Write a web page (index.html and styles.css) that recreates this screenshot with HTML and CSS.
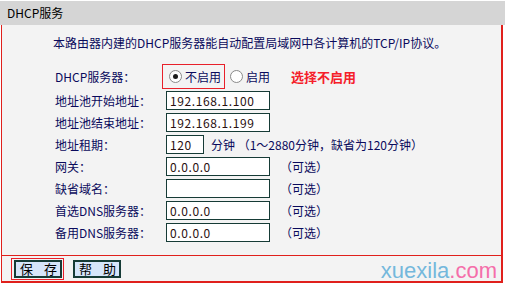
FILE: index.html
```html
<!DOCTYPE html>
<html lang="zh-CN">
<head>
  <meta charset="UTF-8" />
  <title>DHCP服务</title>
  <link rel="stylesheet" href="styles.css">
</head>
<body>
  <div class="panel">
    <div class="title">DHCP服务</div>

    <div class="frame">
      <p class="intro">本路由器内建的DHCP服务器能自动配置局域网中各计算机的TCP/IP协议。</p>

      <div class="form">
        <div class="row row-first">
          <span class="label">DHCP服务器：</span>
          <span class="choice">
            <span class="radio checked"></span>不启用
          </span>
          <span class="radio radio-second"></span>启用
          <span class="note">选择不启用</span>
        </div>
        <div class="row">
          <span class="label">地址池开始地址：</span>
          <input class="field" type="text" value="192.168.1.100">
        </div>
        <div class="row">
          <span class="label">地址池结束地址：</span>
          <input class="field" type="text" value="192.168.1.199">
        </div>
        <div class="row">
          <span class="label">地址租期：</span>
          <input class="field field-short" type="text" value="120">
          <span class="unit">分钟 （1～2880分钟，缺省为120分钟）</span>
        </div>
        <div class="row">
          <span class="label">网关：</span>
          <input class="field" type="text" value="0.0.0.0">
          <span class="hint">（可选）</span>
        </div>
        <div class="row">
          <span class="label">缺省域名：</span>
          <input class="field" type="text" value="">
          <span class="hint">（可选）</span>
        </div>
        <div class="row">
          <span class="label">首选DNS服务器：</span>
          <input class="field" type="text" value="0.0.0.0">
          <span class="hint">（可选）</span>
        </div>
        <div class="row">
          <span class="label">备用DNS服务器：</span>
          <input class="field" type="text" value="0.0.0.0">
          <span class="hint">（可选）</span>
        </div>
      </div>

      <div class="actions">
        <span class="mark"><button class="btn">保 存</button></span>
        <button class="btn btn-help">帮 助</button>
      </div>
    </div>

    <div class="watermark">xuexila<span class="dot-com">.com</span></div>
  </div>
</body>
</html>
```

FILE: styles.css
```css
body {
  margin: 0;
  background: #ffffff;
  font-family: "Noto Sans CJK SC", "Noto Sans", sans-serif;
  font-size: 12px;
}
.panel {
  position: relative;
  width: 505px;
  height: 285px;
  padding-top: 1px;
  box-sizing: border-box;
}
.title {
  height: 24px;
  line-height: 23px;
  padding-left: 7px;
  background: #d5d5d5;
  color: #000;
}
.frame {
  width: 502px;
  margin-left: 1px;
  background: #f3f3f3;
  border-left: 1px solid #e0201c;
  border-right: 2px solid #e0201c;
  border-bottom: 2px solid #e0201c;
  box-sizing: border-box;
}
.intro {
  margin: 0;
  padding: 11px 0 14px 51px;
  line-height: 14px;
  color: #0a0a5c;
}
.form {
  padding: 0 0 12px 53px;
  color: #0a0a5c;
}
.row {
  display: flex;
  align-items: center;
  height: 22px;
}
.row-first {
  height: 25px;
}
.label {
  width: 111px;
  flex: none;
}
.choice {
  display: flex;
  align-items: center;
  height: 23px;
  margin-left: -4px;
  padding: 0 3px 0 6px;
  border: 1px solid #e8202a;
}
.radio {
  display: inline-block;
  position: relative;
  width: 11px;
  height: 11px;
  margin-right: 3px;
  border: 1px solid #8a8a8a;
  border-radius: 50%;
  background: #fff;
}
.radio.checked::after {
  content: "";
  position: absolute;
  left: 3px;
  top: 3px;
  width: 5px;
  height: 5px;
  border-radius: 50%;
  background: #1c1c1c;
}
.radio-second {
  margin-left: 5px;
}
.note {
  margin-left: 21px;
  color: #f5202a;
  font-size: 13px;
  font-weight: bold;
}
.field {
  width: 104px;
  height: 19px;
  margin: 0;
  padding: 0 0 0 3px;
  border: 1px solid #163b36;
  background: #fff;
  box-sizing: border-box;
  font-family: "Noto Sans CJK SC", sans-serif;
  font-size: 12px;
  letter-spacing: 0.6px;
  color: #2a1010;
  outline: none;
}
.field-short {
  width: 38px;
}
.unit {
  margin-left: 7px;
}
.hint {
  margin-left: 10px;
}
.actions {
  display: flex;
  align-items: center;
  height: 25px;
  padding-left: 9px;
  border-top: 1px solid #e0201c;
}
.mark {
  display: flex;
  padding: 1px 1px 1px 2px;
  border: 1px solid #e8202a;
}
.btn {
  width: 48px;
  height: 18px;
  margin: 0;
  padding: 0 0 0 4px;
  border: 2px solid #163b36;
  background: #d6e5fa;
  font-family: "Noto Sans CJK SC", sans-serif;
  font-size: 13px;
  line-height: 14px;
  letter-spacing: 4px;
  white-space: nowrap;
  color: #000;
}
.btn-help {
  margin-left: 9px;
}
.watermark {
  position: absolute;
  right: 8px;
  top: 259px;
  font-family: "Liberation Sans", sans-serif;
  font-size: 22px;
  line-height: 24px;
  color: #74b8dc;
}
.dot-com {
  color: #f56eaa;
}
```
